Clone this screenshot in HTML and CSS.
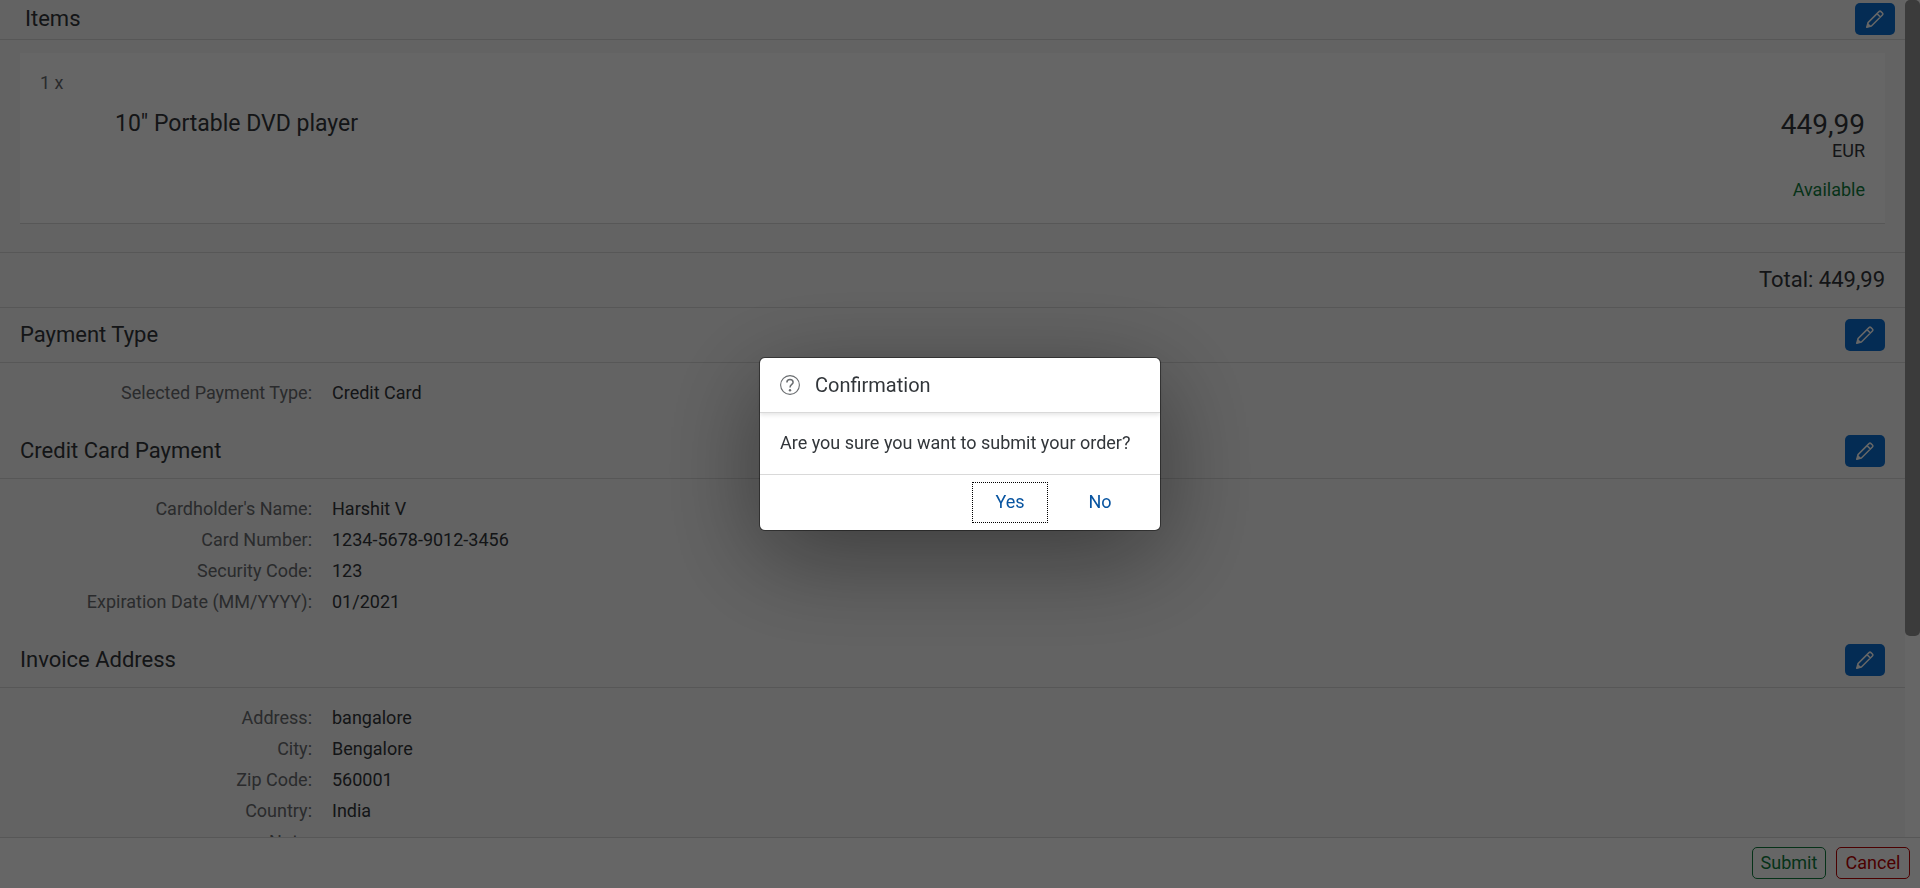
FILE: index.html
```html
<!DOCTYPE html>
<html lang="en">
<head>
<meta charset="utf-8">
<title>Order Summary</title>
<meta name="viewport" content="width=device-width, initial-scale=1">
<link rel="stylesheet" href="styles.css">
</head>
<body>
<svg class="sprite" aria-hidden="true">
  <symbol id="pencil" viewBox="0 0 20 20">
    <path d="M1.8 18.2 3 13.6 14 2.6Q15 1.6 16 2.6L17.4 4Q18.4 5 17.4 6L6.4 17Z M12 4.6 15.4 8" fill="none" stroke="currentColor" stroke-width="1.5" stroke-linejoin="round"/>
    <path d="M1.5 18.5 2.8 13.8 6.2 17.2Z" fill="currentColor"/>
  </symbol>
</svg>
<div class="app">
  <div class="viewport">
    <main class="content">
      <section>
        <header class="bar bar--items">
          <h2 class="title">Items</h2>
          <button class="edit" type="button" aria-label="Edit items"><svg class="edit__icon"><use href="#pencil"/></svg></button>
        </header>
        <article class="item">
          <p class="item__count">1 x</p>
          <div class="item__main">
            <h3 class="title item__name">10" Portable DVD player</h3>
            <div class="item__price">
              <p class="item__amount">449,99</p>
              <p>EUR</p>
              <p class="item__status">Available</p>
            </div>
          </div>
        </article>
        <p class="total title">Total: 449,99</p>
      </section>
      <section>
        <header class="bar bar--divided">
          <h2 class="title">Payment Type</h2>
          <button class="edit" type="button" aria-label="Edit payment type"><svg class="edit__icon"><use href="#pencil"/></svg></button>
        </header>
        <dl class="form">
          <dt>Selected Payment Type:</dt><dd>Credit Card</dd>
        </dl>
      </section>
      <section>
        <header class="bar">
          <h2 class="title">Credit Card Payment</h2>
          <button class="edit" type="button" aria-label="Edit credit card payment"><svg class="edit__icon"><use href="#pencil"/></svg></button>
        </header>
        <dl class="form">
          <dt>Cardholder's Name:</dt><dd>Harshit V</dd>
          <dt>Card Number:</dt><dd>1234-5678-9012-3456</dd>
          <dt>Security Code:</dt><dd>123</dd>
          <dt>Expiration Date (MM/YYYY):</dt><dd>01/2021</dd>
        </dl>
      </section>
      <section>
        <header class="bar">
          <h2 class="title">Invoice Address</h2>
          <button class="edit" type="button" aria-label="Edit invoice address"><svg class="edit__icon"><use href="#pencil"/></svg></button>
        </header>
        <dl class="form">
          <dt>Address:</dt><dd>bangalore</dd>
          <dt>City:</dt><dd>Bengalore</dd>
          <dt>Zip Code:</dt><dd>560001</dd>
          <dt>Country:</dt><dd>India</dd>
          <dt>Note:</dt><dd></dd>
        </dl>
      </section>
    </main>
    <div class="scrollbar" aria-hidden="true"><div class="scrollbar__thumb"></div></div>
  </div>
  <footer class="footer">
    <button class="action action--accept" type="button">Submit</button>
    <button class="action action--reject" type="button">Cancel</button>
  </footer>
</div>
<div class="overlay">
  <div class="dialog" role="alertdialog" aria-modal="true" aria-labelledby="dialog-title" aria-describedby="dialog-text">
    <header class="dialog__header">
      <svg class="dialog__icon" viewBox="0 0 20 20" aria-hidden="true">
        <circle cx="10" cy="10" r="9.4" fill="none" stroke="currentColor" stroke-width="1.1"/>
        <path d="M6.9 7.4C6.9 5.4 8.2 4.4 10 4.4S13.1 5.5 13.1 7.2C13.1 9.6 10 9.3 10 12.6" fill="none" stroke="currentColor" stroke-width="1.5"/>
        <circle cx="10" cy="15.3" r="1.2" fill="currentColor"/>
      </svg>
      <h1 class="dialog__title" id="dialog-title">Confirmation</h1>
    </header>
    <p class="dialog__text" id="dialog-text">Are you sure you want to submit your order?</p>
    <footer class="dialog__footer">
      <button class="choice choice--focused" type="button">Yes</button>
      <button class="choice" type="button">No</button>
    </footer>
  </div>
</div>
</body>
</html>
```

FILE: styles.css
```css
* {
  box-sizing: border-box;
  margin: 0;
  padding: 0;
}

body {
  color: #32363a;
  font: 18px/22px Roboto, "Liberation Sans", sans-serif;
}

button {
  font: inherit;
}

.sprite {
  display: none;
}

.app {
  display: flex;
  flex-direction: column;
  height: 100vh;
  background: #f7f7f7;
}

.viewport {
  display: flex;
  flex: 1;
  min-height: 0;
}

.content {
  flex: 1;
  overflow: hidden;
}

.scrollbar {
  width: 15px;
  background: #fff;
}

.scrollbar__thumb {
  height: 76%;
  border-radius: 5px;
  background: #949494;
}

.title {
  font-size: 22px;
  font-weight: 400;
  line-height: 28px;
}

.bar {
  display: flex;
  align-items: center;
  justify-content: space-between;
  height: 56px;
  padding: 0 20px;
  border-bottom: 1px solid #d9d9d9;
}

.bar--divided {
  border-top: 1px solid #d9d9d9;
}

.bar--items {
  height: 40px;
  padding: 0 10px 1px 25px;
}

.edit {
  display: flex;
  align-items: center;
  justify-content: center;
  width: 40px;
  height: 32px;
  border: 0;
  border-radius: 5px;
  background: #0a6ed1;
  color: #fff;
}

.edit__icon {
  width: 20px;
  height: 20px;
}

.item {
  margin: 13px 20px 28px;
  padding: 19px 20px 22px;
  border-bottom: 1px solid #d9d9d9;
  background: #fff;
}

.item__count {
  color: #6a6d70;
}

.item__main {
  display: flex;
  justify-content: space-between;
  margin-top: 16px;
  padding-left: 75px;
}

.item__name {
  font-size: 23px;
}

.item__price {
  text-align: right;
}

.item__amount {
  font-size: 28px;
  line-height: 30px;
}

.item__status {
  margin-top: 17px;
  color: #107e3e;
}

.total {
  padding: 13px 20px;
  border-top: 1px solid #d9d9d9;
  text-align: right;
}

.form {
  display: grid;
  grid-template-columns: 312px 1fr;
  column-gap: 20px;
  padding: 14px 0 15px;
  line-height: 31px;
}

.form dt {
  color: #6a6d70;
  text-align: right;
}

.footer {
  display: flex;
  align-items: center;
  justify-content: flex-end;
  gap: 10px;
  height: 51px;
  padding: 0 10px;
  border-top: 1px solid #d9d9d9;
  background: #fff;
}

.action {
  width: 74px;
  height: 32px;
  border: 1px solid;
  border-radius: 5px;
  background: transparent;
}

.action--accept {
  color: #107e3e;
}

.action--reject {
  color: #b00;
}

.overlay {
  position: fixed;
  inset: 0;
  display: flex;
  align-items: center;
  justify-content: center;
  background: rgba(0, 0, 0, 0.6);
}

.dialog {
  width: 400px;
  border-radius: 5px;
  background: #fff;
  box-shadow: 0 0 0 1px rgba(0, 0, 0, 0.42), 0 25px 100px 0 rgba(0, 0, 0, 0.42);
}

.dialog__header {
  display: flex;
  align-items: center;
  gap: 15px;
  height: 55px;
  padding: 0 20px;
  border-bottom: 1px solid #d9d9d9;
  box-shadow: 0 2px 4px rgba(0, 0, 0, 0.1);
}

.dialog__icon {
  width: 20px;
  height: 20px;
  color: #6a6d70;
}

.dialog__title {
  font-size: 20px;
  font-weight: 400;
}

.dialog__text {
  padding: 19px 20px 20px;
}

.dialog__footer {
  display: flex;
  align-items: center;
  justify-content: flex-end;
  gap: 14px;
  height: 56px;
  padding: 0 22px;
  border-top: 1px solid #d9d9d9;
}

.choice {
  width: 76px;
  height: 41px;
  padding-bottom: 2px;
  border: 1px solid transparent;
  background: transparent;
  color: #0854a0;
}

.choice--focused {
  border: 1px dotted #000;
}
```
